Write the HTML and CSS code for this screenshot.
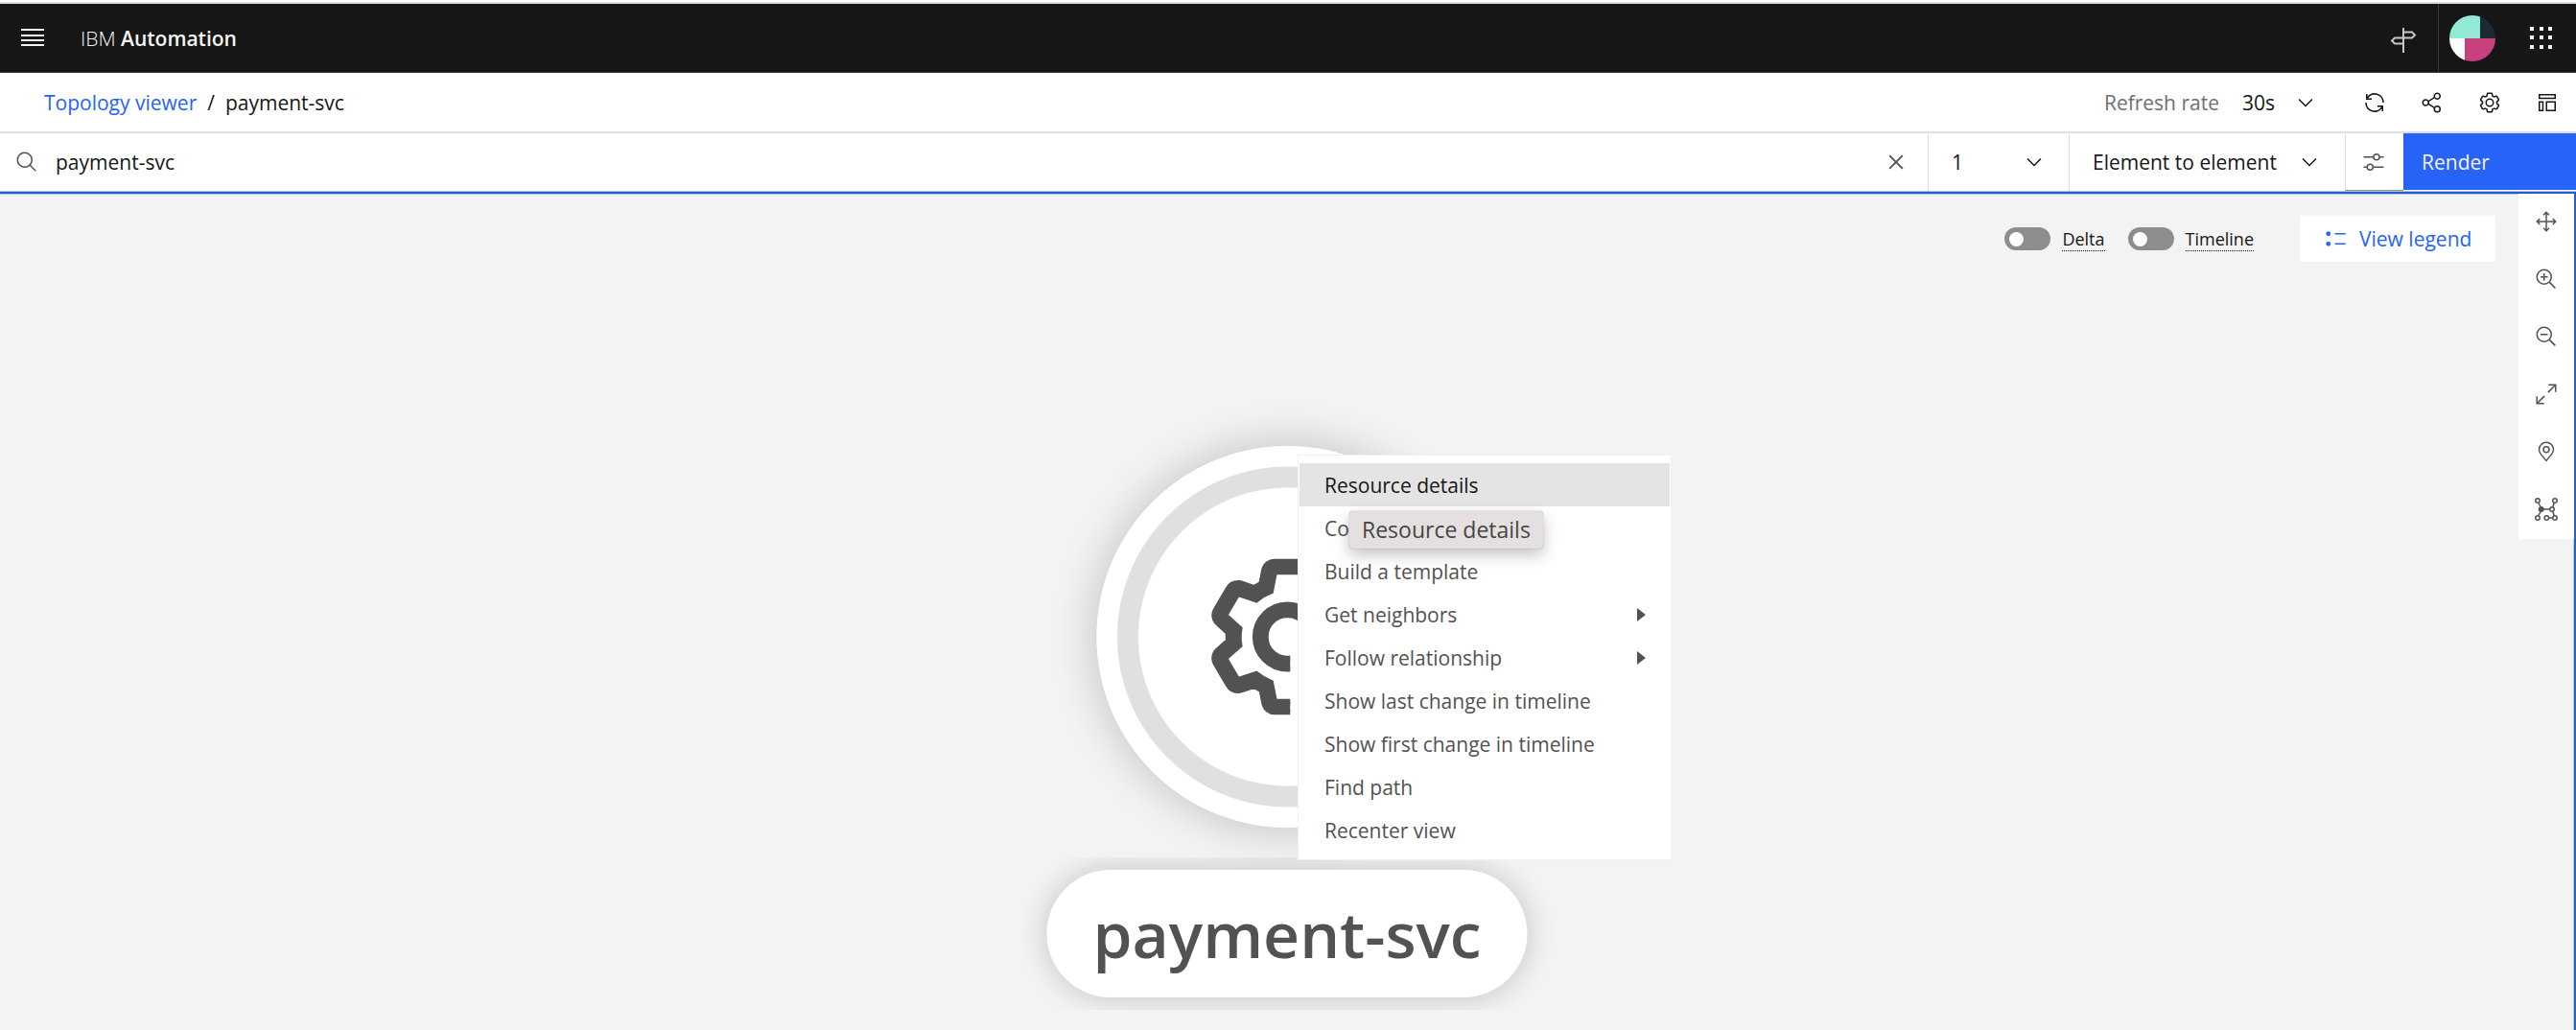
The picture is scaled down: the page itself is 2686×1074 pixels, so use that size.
FILE: index.html
```html
<!DOCTYPE html>
<html lang="en">
<head>
<meta charset="utf-8">
<meta name="viewport" content="width=device-width, initial-scale=1">
<title>Topology viewer</title>
<link rel="stylesheet" href="styles.css">
</head>
<body>
<header class="shell">
  <button class="shell-menu" type="button" aria-label="Open menu">
    <svg class="icon-lg" viewBox="0 0 30 30"><path d="M3 5h24v2H3zM3 11h24v2H3zM3 16h24v2H3zM3 21h24v2H3z"/></svg>
  </button>
  <a class="brand" href="#">IBM <b>Automation</b></a>
  <div class="shell-actions">
    <button class="shell-tour" type="button" aria-label="Guided tours">
      <svg class="icon-lg" viewBox="0 0 30 30"><path class="line" d="M15 2v26M15 6.500h9l3 3-3 3h-9M15 12.500H6l-3 3 3 3h9"/></svg>
    </button>
    <button class="shell-user" type="button" aria-label="Profile">
      <svg class="avatar" viewBox="0 0 48 48"><clipPath id="round"><circle cx="24" cy="24" r="24"/></clipPath><g clip-path="url(#round)"><path fill="#92e9d6" d="M0 0h32v24H0z"/><path fill="#1b2a35" d="M32 0h16v24H32z"/><path fill="#fcfcfd" d="M0 24h16v24H0z"/><path fill="#c8417f" d="M16 24h32v24H16z"/></g></svg>
    </button>
    <button class="shell-apps" type="button" aria-label="Switch application">
      <svg class="icon-lg" viewBox="0 0 30 30"><path d="M3 3h4v4H3zM13 3h4v4h-4zM22 3h4v4h-4zM3 12h4v4H3zM13 12h4v4h-4zM22 12h4v4h-4zM3 22h4v4H3zM13 22h4v4h-4zM22 22h4v4h-4z"/></svg>
    </button>
  </div>
</header>

<div class="titlebar">
  <nav class="crumbs" aria-label="Breadcrumb">
    <a href="#">Topology viewer</a><span>/</span><span>payment-svc</span>
  </nav>
  <div class="title-actions">
    <label class="rate-label" for="rate">Refresh rate</label>
    <div class="pick pick-rate">
      <select id="rate"><option>30s</option></select>
      <svg class="icon" viewBox="0 0 32 32"><path d="M16 22 6 12l1.400-1.400 8.600 8.600 8.600-8.600L26 12z"/></svg>
    </div>
    <button class="tool" type="button" aria-label="Refresh"><svg class="icon" viewBox="0 0 32 32"><path d="M12 10H6.780A11 11 0 0 1 27 16h2A13 13 0 0 0 6 7.680V4H4v8h8zm8 12h5.220A11 11 0 0 1 5 16H3a13 13 0 0 0 23 8.320V28h2v-8h-8z"/></svg></button>
    <button class="tool" type="button" aria-label="Share"><svg class="icon" viewBox="0 0 32 32"><path d="M23 20a5 5 0 0 0-3.890 1.890L11.800 17.320a4.460 4.460 0 0 0 0-2.640l7.310-4.570A5 5 0 1 0 18 7a4.790 4.790 0 0 0 .2 1.320l-7.310 4.570a5 5 0 1 0 0 6.220l7.310 4.570A4.790 4.790 0 0 0 18 25a5 5 0 1 0 5-5ZM23 4a3 3 0 1 1-3 3A3 3 0 0 1 23 4ZM7 19a3 3 0 1 1 3-3A3 3 0 0 1 7 19Zm16 9a3 3 0 1 1 3-3A3 3 0 0 1 23 28Z"/></svg></button>
    <button class="tool" type="button" aria-label="Settings"><svg class="icon" viewBox="0 0 32 32"><path id="gear" d="M27,16.760c0-.25,0-.5,0-.76s0-.51,0-.77l1.920-1.680A2,2,0,0,0,29.300,11L26.940,7a2,2,0,0,0-1.730-1,2,2,0,0,0-.64.1l-2.430.82a11.350,11.350,0,0,0-1.310-.75l-.51-2.520a2,2,0,0,0-2-1.610H13.640a2,2,0,0,0-2,1.610l-.51,2.520a11.480,11.480,0,0,0-1.320.75L7.430,6.060A2,2,0,0,0,6.790,6,2,2,0,0,0,5.060,7L2.700,11a2,2,0,0,0,.41,2.510L5,15.240c0,.25,0,.5,0,.76s0,.51,0,.77L3.110,18.450A2,2,0,0,0,2.700,21L5.060,25a2,2,0,0,0,1.730,1,2,2,0,0,0,.64-.1l2.430-.82a11.350,11.350,0,0,0,1.310.75l.51,2.520a2,2,0,0,0,2,1.610h4.720a2,2,0,0,0,2-1.610l.51-2.520a11.480,11.480,0,0,0,1.320-.75l2.420.82a2,2,0,0,0,.64.1,2,2,0,0,0,1.730-1L29.300,21a2,2,0,0,0-.41-2.510ZM25.210,24l-3.430-1.160a8.860,8.860,0,0,1-2.710,1.570L18.360,28H13.640l-.71-3.550a9.360,9.360,0,0,1-2.700-1.570L6.790,24,4.430,20l2.720-2.400a8.900,8.900,0,0,1,0-3.130L4.430,12,6.790,8l3.430,1.160a8.860,8.860,0,0,1,2.710-1.570L13.640,4h4.720l.71,3.550a9.360,9.360,0,0,1,2.700,1.570L25.210,8,27.570,12l-2.720,2.400a8.900,8.900,0,0,1,0,3.130L27.570,20ZM16,22a6,6,0,1,1,6-6A5.940,5.940,0,0,1,16,22Zm0-10a3.910,3.910,0,0,0-4,4,3.910,3.910,0,0,0,4,4,3.910,3.910,0,0,0,4-4A3.910,3.910,0,0,0,16,12Z"/></svg></button>
    <button class="tool" type="button" aria-label="Layout"><svg class="icon" viewBox="0 0 32 32"><path class="line" d="M5 5h22v5H5zM5 15h5v12H5zM15 15h12v12H15z"/></svg></button>
  </div>
</div>

<form class="searchbar">
  <label class="search">
    <svg class="icon" viewBox="0 0 32 32"><path d="m29 27.590-7.550-7.550a11 11 0 1 0-1.410 1.410L27.590 29ZM4 13a9 9 0 1 1 9 9 9 9 0 0 1-9-9Z"/></svg>
    <input type="text" value="payment-svc" aria-label="Search for a resource">
  </label>
  <button class="clear" type="button" aria-label="Clear search"><svg class="icon-lg" viewBox="0 0 32 32"><path d="M24 9.400 22.600 8 16 14.600 9.400 8 8 9.400l6.600 6.600L8 22.600 9.400 24l6.600-6.600 6.600 6.600 1.400-1.400-6.600-6.600z"/></svg></button>
  <div class="pick pick-hops">
    <select aria-label="Number of hops"><option>1</option></select>
    <svg class="icon" viewBox="0 0 32 32"><path d="M16 22 6 12l1.400-1.400 8.600 8.600 8.600-8.600L26 12z"/></svg>
  </div>
  <div class="pick pick-type">
    <select aria-label="Hop type"><option>Element to element</option></select>
    <svg class="icon" viewBox="0 0 32 32"><path d="M16 22 6 12l1.400-1.400 8.600 8.600 8.600-8.600L26 12z"/></svg>
  </div>
  <button class="filter" type="button" aria-label="Filters"><svg class="icon" viewBox="0 0 32 32"><path class="line" d="M2 9h14M24 9h6M2 23h5M15 23h15"/><circle class="line" cx="20" cy="9" r="4"/><circle class="line" cx="11" cy="23" r="4"/></svg></button>
  <button class="render" type="submit">Render</button>
</form>

<main class="canvas">
  <div class="overlay">
    <div class="controls">
      <label class="toggle"><input type="checkbox" role="switch"><span>Delta</span></label>
      <label class="toggle"><input type="checkbox" role="switch"><span>Timeline</span></label>
      <button class="legend" type="button">
        <svg class="icon" viewBox="0 0 32 32"><circle cx="5" cy="9" r="3.200"/><circle cx="5" cy="23" r="3.200"/><path d="M14 8h15v2H14zM14 22h15v2H14z"/></svg>
        View legend
      </button>
    </div>
    <div class="toolbar" role="toolbar" aria-label="Canvas tools">
      <button type="button" aria-label="Fit"><svg class="icon" viewBox="0 0 32 32"><path class="line" d="M16 3v26M3 16h26M12 7l4-4 4 4M12 25l4 4 4-4M7 12l-4 4 4 4M25 12l4 4-4 4"/></svg></button>
      <button type="button" aria-label="Zoom in"><svg class="icon" viewBox="0 0 32 32"><circle class="line" cx="13" cy="13" r="10"/><path class="line" d="m20.500 20.500 8 8M13 8v10M8 13h10"/></svg></button>
      <button type="button" aria-label="Zoom out"><svg class="icon" viewBox="0 0 32 32"><circle class="line" cx="13" cy="13" r="10"/><path class="line" d="m20.500 20.500 8 8M8 13h10"/></svg></button>
      <button type="button" aria-label="Expand"><svg class="icon" viewBox="0 0 32 32"><path class="line" d="M19 3h10v10M29 3 18.500 13.500M13 29H3V19M3 29l10.500-10.500"/></svg></button>
      <button type="button" aria-label="Locate"><svg class="icon" viewBox="0 0 32 32"><circle class="line" cx="16" cy="13" r="4"/><path class="line" d="M16 28.500 8.500 19.500C6.500 17 6 15 6 13a10 10 0 0 1 20 0c0 2-.5 4-2.500 6.500z"/></svg></button>
      <button type="button" aria-label="Change layout"><svg class="icon" viewBox="0 0 32 32"><path class="line" d="M5 7l4 7M9 18 5 25M9 16h12M25 13l2-6M25 19l2 6M19 28h6"/><circle cx="9" cy="16" r="4"/><g class="line"><circle cx="4" cy="4" r="3"/><circle cx="28" cy="4" r="3"/><circle cx="24" cy="16" r="3"/><circle cx="4" cy="28" r="3"/><circle cx="16.500" cy="28" r="3"/><circle cx="28" cy="28" r="3"/></g></svg></button>
    </div>
  </div>

  <div class="node">
    <div class="node-disc"><svg viewBox="0 0 32 32"><clipPath id="cut"><path d="M0 0h32v14H16.500v18H0z"/></clipPath><use href="#gear" clip-path="url(#cut)"/></svg></div>
    <div class="node-label">payment-svc</div>
  </div>

  <ul class="menu" role="menu">
    <li><button class="active" type="button" role="menuitem">Resource details</button></li>
    <li><button type="button" role="menuitem">Compare</button></li>
    <li><button type="button" role="menuitem">Build a template</button></li>
    <li><button class="parent" type="button" role="menuitem">Get neighbors</button></li>
    <li><button class="parent" type="button" role="menuitem">Follow relationship</button></li>
    <li><button type="button" role="menuitem">Show last change in timeline</button></li>
    <li><button type="button" role="menuitem">Show first change in timeline</button></li>
    <li><button type="button" role="menuitem">Find path</button></li>
    <li><button type="button" role="menuitem">Recenter view</button></li>
  </ul>
  <div class="tip" role="tooltip">Resource details</div>
</main>
</body>
</html>
```
FILE: styles.css
```css
* { box-sizing: border-box; }

body {
  margin: 0;
  min-height: 100vh;
  display: flex;
  flex-direction: column;
  background: #fff;
  color: #161616;
  font: 21px/28px "Open Sans", "Noto Sans", sans-serif;
}

button, input, select {
  margin: 0;
  padding: 0;
  border: 0;
  border-radius: 0;
  background: none;
  color: inherit;
  font: inherit;
  outline: 0;
}

a { color: #2663f6; text-decoration: none; }

svg { display: block; fill: currentColor; flex: none; }
.icon { width: 24px; height: 24px; }
.icon-lg { width: 30px; height: 30px; }
.line { fill: none; stroke: currentColor; stroke-width: 2; }

/* Global header */
.shell {
  display: flex;
  align-items: stretch;
  height: 74px;
  margin-top: 2px;
  border-top: 2px solid #dcdcdc;
  border-bottom: 1px solid #393939;
  background: #161616;
  color: #f4f4f4;
}
.shell button { display: grid; place-items: center; }
.shell-menu { width: 68px; }
.brand { padding-left: 16px; align-self: center; color: inherit; font-weight: 300; }
.brand b { font-weight: 600; }
.shell-actions { display: flex; margin-left: auto; }
.shell .shell-tour { width: 72px; padding-top: 4px; color: #c6c6c6; }
.shell .shell-user { width: 71px; border-left: 1px solid #393939; }
.shell-apps { width: 73px; }
.avatar { width: 48px; height: 48px; }

/* Breadcrumb row */
.titlebar {
  display: flex;
  align-items: center;
  justify-content: space-between;
  height: 63px;
  padding-left: 46px;
  border-bottom: 2px solid #e0e0e0;
}
.crumbs { display: flex; gap: 11px; }
.title-actions { display: flex; align-items: center; }
.rate-label { color: #6f6f6f; margin-right: 24px; }
.tool { width: 60px; height: 60px; display: grid; place-items: center; }

/* Select with a chevron laid over its right side */
.pick { display: grid; align-items: center; }
.pick > * { grid-area: 1 / 1; }
.pick select { appearance: none; width: 100%; height: 100%; }
.pick svg { justify-self: end; pointer-events: none; }
.pick-rate { width: 78px; margin-right: 30px; }

/* Search row */
.searchbar { display: flex; height: 61px; border-bottom: 1px solid #a9c1ea; }
.search { flex: 1; display: flex; align-items: center; gap: 18px; padding-left: 16px; color: #525252; }
.search input { flex: 1; color: #161616; }
.clear { display: grid; place-items: center; width: 66px; color: #525252; }
.pick-hops, .pick-type { border-left: 1px solid #e0e0e0; padding: 0 24px; }
.pick-hops { width: 147px; }
.pick-type { width: 288px; padding-right: 25px; }
.filter {
  display: grid;
  place-items: center;
  width: 61px;
  padding-right: 2px;
  border-left: 1px solid #e0e0e0;
  border-bottom: 1px solid #8d8d8d;
  color: #525252;
}
.render { width: 180px; height: 59px; padding-left: 19px; background: #2663f6; color: #f4f4f4; text-align: left; }

/* Topology canvas */
.canvas {
  position: relative;
  flex: 1;
  min-height: 874px;
  border: 2px solid #2060c8;
  border-left: 0;
  border-bottom: 0;
  background: #f3f3f3;
  box-shadow: inset -1px 1px #b9cbec;
  overflow: hidden;
}
.overlay { display: flex; justify-content: flex-end; align-items: flex-start; gap: 24px; margin-right: -2px; }
.controls { display: flex; align-items: center; gap: 24px; padding-top: 23px; }
.toggle { display: flex; align-items: center; gap: 12px; font-size: 18px; line-height: 24px; }
.toggle span { border-bottom: 1px dotted #161616; }
.toggle input {
  appearance: none;
  display: flex;
  align-items: center;
  width: 48px;
  height: 24px;
  padding: 0 5px;
  border-radius: 12px;
  background: #8d8d8d;
}
.toggle input::before { content: ""; width: 15px; height: 15px; border-radius: 50%; background: #fff; }
.legend {
  display: flex;
  align-items: center;
  gap: 12px;
  width: 204px;
  height: 48px;
  margin-left: 24px;
  padding-left: 26px;
  background: #fff;
  color: #2663f6;
  white-space: nowrap;
}
.toolbar { display: flex; flex-direction: column; width: 60px; background: #fff; color: #525252; }
.toolbar button { height: 60px; display: grid; place-items: center; padding: 0 2px 2px 0; }

.node {
  position: absolute;
  top: 263px;
  left: 50%;
  transform: translateX(-50%);
  display: flex;
  flex-direction: column;
  align-items: center;
  gap: 44px;
  color: #525252;
}
.node-disc {
  display: grid;
  place-items: center;
  width: 398px;
  height: 398px;
  border-radius: 50%;
  background: radial-gradient(circle, #fff 155px, #e0e0e0 156px, #e0e0e0 177px, #fff 178px);
  box-shadow: 0 0 48px rgba(0, 0, 0, .22);
}
.node-disc svg { width: 180px; height: 180px; stroke: currentColor; stroke-width: 1; }
.node-label {
  padding: 0 48px;
  border-radius: 67px;
  background: #fff;
  box-shadow: 0 0 32px rgba(0, 0, 0, .2);
  clip-path: inset(-13px -40px);
  font-size: 66px;
  font-weight: 600;
  line-height: 133px;
  white-space: nowrap;
}

.menu {
  position: absolute;
  top: 272px;
  left: calc(50% + 11px);
  width: 390px;
  margin: 0;
  padding: 8px 1px;
  border: 1px solid #f0f0f0;
  background: #fff;
  list-style: none;
  color: #525252;
}
.menu button { display: flex; align-items: center; justify-content: space-between; width: 100%; height: 45px; padding: 0 25px 0 26px; }
.menu .active { background: #e4e4e4; color: #161616; }
.menu .parent::after { content: ""; border: 7px solid transparent; border-left: 9px solid #525252; border-right: 0; }

.tip {
  position: absolute;
  top: 331px;
  left: calc(50% + 65px);
  padding: 5px 13px 6px;
  border-radius: 4px;
  background: #e5e0e0;
  box-shadow: 0 0 1px rgba(0, 0, 0, .5), 0 6px 16px rgba(0, 0, 0, .25);
  color: #454545;
  font-size: 23px;
  white-space: nowrap;
}
```
